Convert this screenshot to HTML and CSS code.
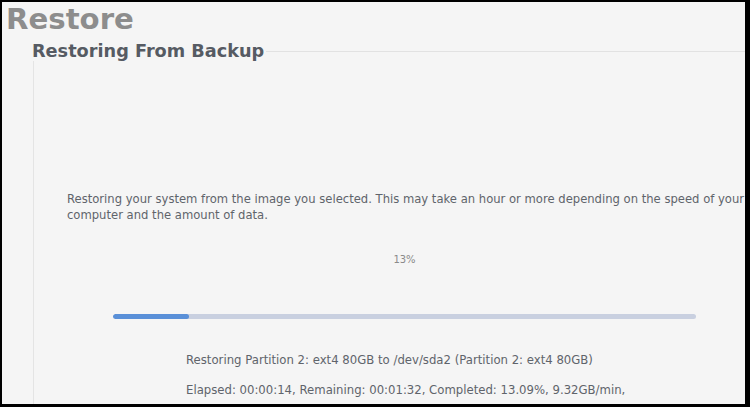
FILE: index.html
```html
<!DOCTYPE html>
<html lang="en">
<head>
    <meta charset="UTF-8">
    <title>Restore</title>
    <link rel="stylesheet" href="styles.css">
</head>
<body>
    <div class="window">
        <h1 class="page-title">Restore</h1>
        <div class="group">
            <div class="group-head">
                <h2 class="group-title">Restoring From Backup</h2>
                <span class="group-rule"></span>
            </div>
            <div class="group-body">
                <p class="intro">Restoring your system from the image you selected.  This may take an hour or more depending on the speed of your computer and the amount of data.</p>
                <div class="progress-block">
                    <div class="percent">13%</div>
                    <div class="progress">
                        <div class="progress-fill" style="width: 13.09%"></div>
                    </div>
                </div>
                <div class="status">
                    <p class="status-line">Restoring Partition 2: ext4 80GB to /dev/sda2 (Partition 2: ext4 80GB)</p>
                    <p class="status-line">Elapsed: 00:00:14, Remaining: 00:01:32, Completed:  13.09%,   9.32GB/min,</p>
                </div>
            </div>
        </div>
    </div>
</body>
</html>
```

FILE: styles.css
```css
html, body {
    margin: 0;
    height: 100%;
    background-color: #000;
    overflow: hidden;
}
body {
    font-family: 'DejaVu Sans', 'Noto Sans', sans-serif;
}
.window {
    margin: 2px 5px 0 2px;
    height: 402px;
    background-color: #f5f5f5;
    overflow: hidden;
}
.page-title {
    margin: 0 0 0 4px;
    font-size: 29.2px;
    font-weight: bold;
    color: #8d8d8d;
    line-height: normal;
}
.group {
    margin: 5px 0 0 30px;
    width: 743px;
}
.group-head {
    display: flex;
    align-items: center;
    height: 20px;
}
.group-title {
    margin: 0;
    font-size: 17.7px;
    font-weight: bold;
    color: #565b63;
    white-space: nowrap;
}
.group-rule {
    flex: 1;
    margin-left: 2px;
    border-top: 1px solid #e2e2e2;
}
.group-body {
    margin-left: 1px;
    border-left: 1px solid #e4e4e4;
    padding: 0 30px 0 33px;
    height: 400px;
    color: #5f646b;
    font-size: 11.7px;
}
.intro {
    margin: 0;
    padding-top: 130px;
    font-size: 11.6px;
    line-height: 16px;
}
.progress-block {
    width: 583px;
    margin: 31px 0 0 46px;
}
.percent {
    text-align: center;
    font-size: 10px;
    color: #8a8a8a;
}
.progress {
    margin-top: 49px;
    height: 5px;
    border-radius: 3px;
    background-color: #c9d0e0;
    overflow: hidden;
}
.progress-fill {
    height: 100%;
    border-radius: 3px;
    background-color: #5a90d8;
}
.status {
    margin: 33px 0 0 119px;
}
.status-line {
    margin: 0 0 14px;
    line-height: 16px;
    white-space: nowrap;
}
```
